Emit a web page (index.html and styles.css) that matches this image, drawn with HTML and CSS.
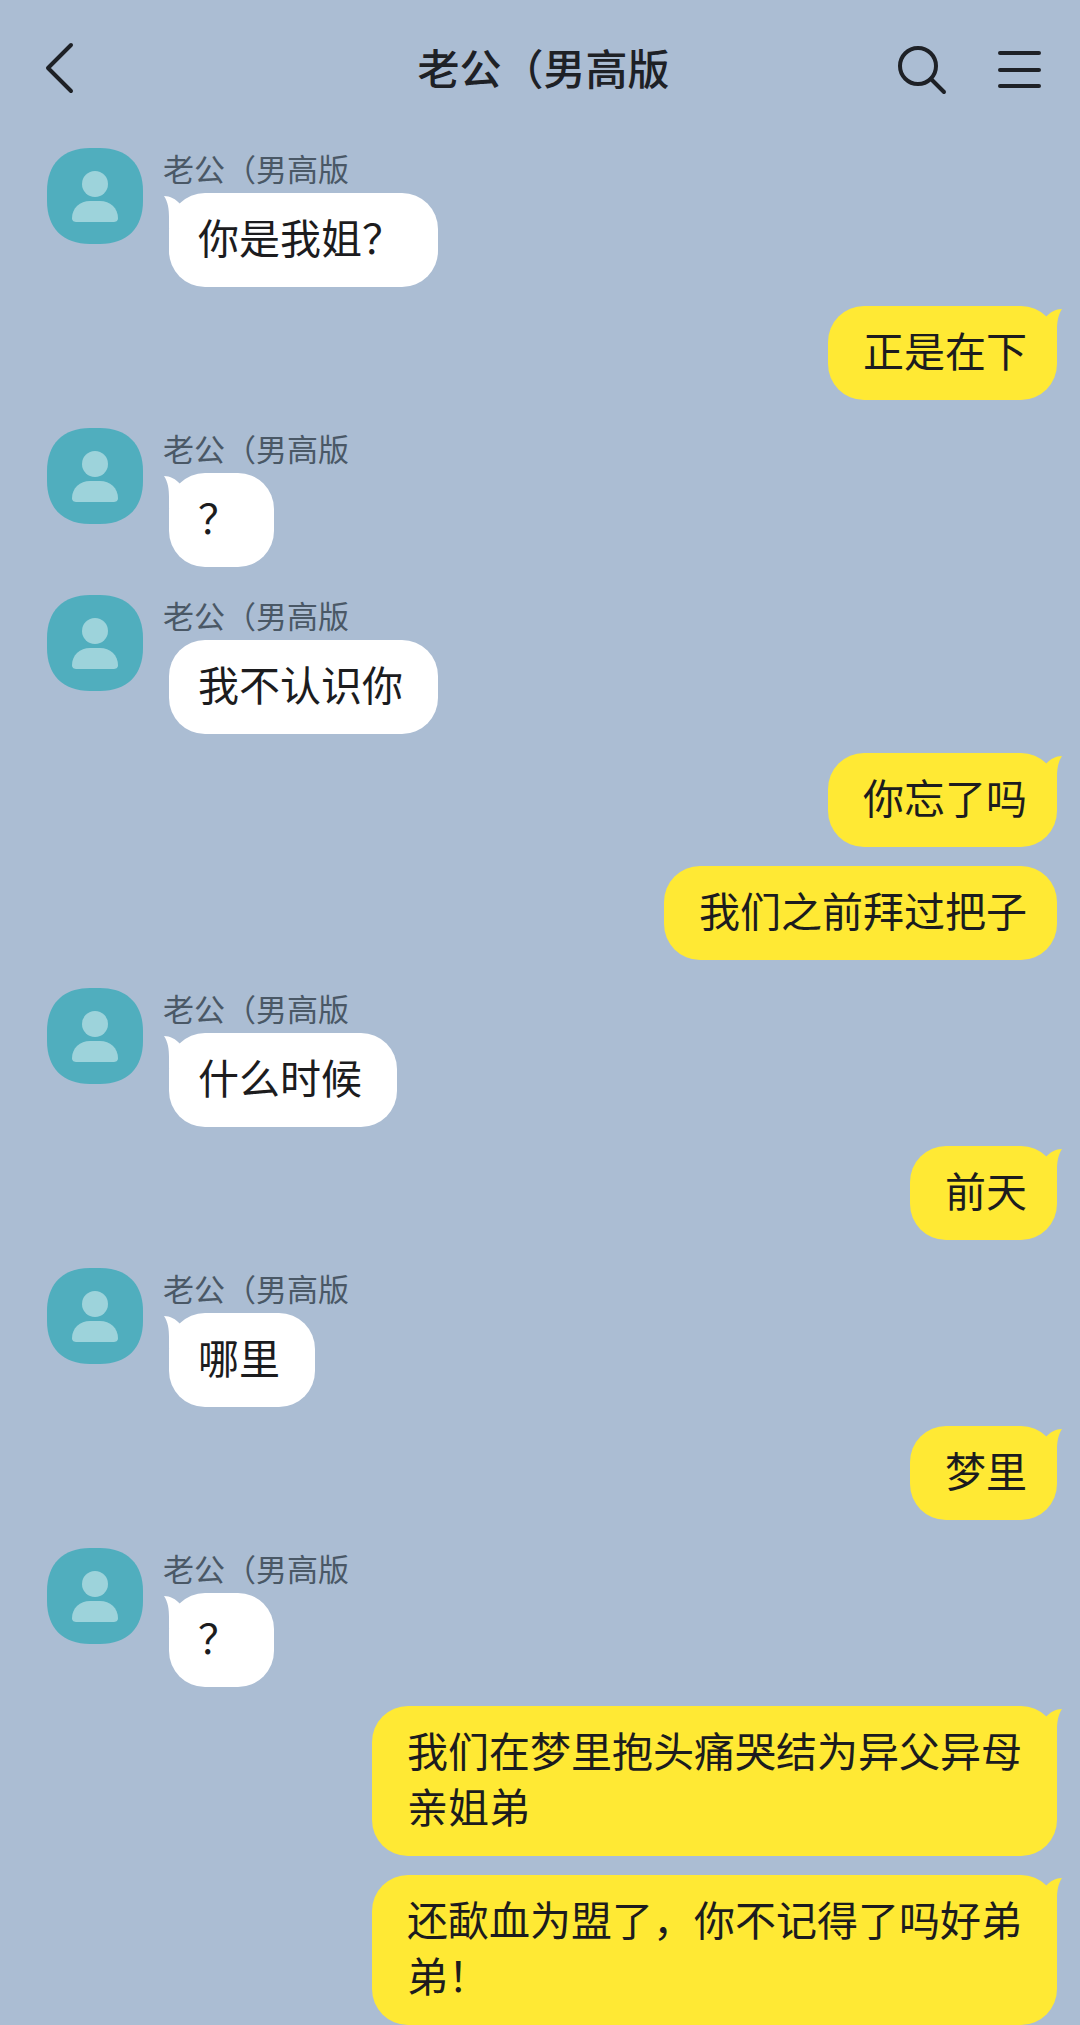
FILE: index.html
```
<!DOCTYPE html>
<html lang="zh-CN">
<head>
    <meta charset="UTF-8">
    <meta name="viewport" content="width=device-width, initial-scale=1.0">
    <title>老公（男高版</title>
    <link rel="stylesheet" href="styles.css">
</head>
<body>

<!-- Shared shapes -->
<svg class="sprite" aria-hidden="true">
    <symbol id="avatar" viewBox="0 0 96 96">
        <path fill="#50aebe" d="M0 43C0 16 16 0 43 0H53C80 0 96 16 96 43V53C96 80 80 96 53 96H43C16 96 0 80 0 53Z"/>
        <circle fill="#9dd3db" cx="48" cy="36" r="13"/>
        <path fill="#9dd3db" d="M25 70C25 60 33 53 43 53H53C63 53 71 60 71 70C71 73 69 74 66 74H30C27 74 25 73 25 70Z"/>
    </symbol>
    <symbol id="tail-left" viewBox="0 0 18 32">
        <path d="M0 0C6 0 12 3 16 8V32H5V21C5 13 4 6 0 0Z"/>
    </symbol>
    <symbol id="tail-right" viewBox="0 0 18 32">
        <path d="M18 0C12 0 6 3 2 8V32H13V21C13 13 14 6 18 0Z"/>
    </symbol>
</svg>

<header class="header">
    <button class="icon-btn" type="button" aria-label="返回">
        <svg width="28" height="50" viewBox="0 0 28 50"><path d="M26 1L3 24L26 47"/></svg>
    </button>
    <h1 class="title">老公（男高版</h1>
    <div class="actions">
        <button class="icon-btn" type="button" aria-label="搜索">
            <svg width="50" height="50" viewBox="0 0 50 50"><circle cx="20" cy="22" r="18"/><path d="M33 35L46 48"/></svg>
        </button>
        <button class="icon-btn" type="button" aria-label="菜单">
            <svg width="46" height="50" viewBox="0 0 46 50"><path d="M4 9H43M4 26H43M4 42H43"/></svg>
        </button>
    </div>
</header>

<main class="chat">
    <div class="message received">
        <svg class="avatar"><use href="#avatar"/></svg>
        <div class="content">
            <div class="name">老公（男高版</div>
            <div class="bubble">你是我姐？<svg class="tail"><use href="#tail-left"/></svg></div>
        </div>
    </div>

    <div class="message sent">
        <div class="bubble">正是在下<svg class="tail"><use href="#tail-right"/></svg></div>
    </div>

    <div class="message received">
        <svg class="avatar"><use href="#avatar"/></svg>
        <div class="content">
            <div class="name">老公（男高版</div>
            <div class="bubble">？<svg class="tail"><use href="#tail-left"/></svg></div>
        </div>
    </div>

    <div class="message received">
        <svg class="avatar"><use href="#avatar"/></svg>
        <div class="content">
            <div class="name">老公（男高版</div>
            <div class="bubble">我不认识你</div>
        </div>
    </div>

    <div class="message sent">
        <div class="bubble">你忘了吗<svg class="tail"><use href="#tail-right"/></svg></div>
    </div>

    <div class="message sent">
        <div class="bubble">我们之前拜过把子</div>
    </div>

    <div class="message received">
        <svg class="avatar"><use href="#avatar"/></svg>
        <div class="content">
            <div class="name">老公（男高版</div>
            <div class="bubble">什么时候<svg class="tail"><use href="#tail-left"/></svg></div>
        </div>
    </div>

    <div class="message sent">
        <div class="bubble">前天<svg class="tail"><use href="#tail-right"/></svg></div>
    </div>

    <div class="message received">
        <svg class="avatar"><use href="#avatar"/></svg>
        <div class="content">
            <div class="name">老公（男高版</div>
            <div class="bubble">哪里<svg class="tail"><use href="#tail-left"/></svg></div>
        </div>
    </div>

    <div class="message sent">
        <div class="bubble">梦里<svg class="tail"><use href="#tail-right"/></svg></div>
    </div>

    <div class="message received">
        <svg class="avatar"><use href="#avatar"/></svg>
        <div class="content">
            <div class="name">老公（男高版</div>
            <div class="bubble">？<svg class="tail"><use href="#tail-left"/></svg></div>
        </div>
    </div>

    <div class="message sent">
        <div class="bubble">我们在梦里抱头痛哭结为异父异母亲姐弟<svg class="tail"><use href="#tail-right"/></svg></div>
    </div>

    <div class="message sent">
        <div class="bubble">还歃血为盟了，你不记得了吗好弟弟！<svg class="tail"><use href="#tail-right"/></svg></div>
    </div>
</main>

</body>
</html>
```

FILE: styles.css
```
* {
    box-sizing: border-box;
}
body {
    margin: 0;
    background-color: #abbdd3;
    color: #1c1c1e;
    font-family: "Noto Sans CJK SC", sans-serif;
}
.sprite {
    position: absolute;
    width: 0;
    height: 0;
}

/* Header */
.header {
    display: grid;
    grid-template-columns: 1fr auto 1fr;
    align-items: center;
    height: 138px;
    padding: 0 38px 0 45px;
}
.title {
    margin: 0;
    padding-bottom: 4px;
    font-size: 42px;
    font-weight: 500;
    line-height: 56px;
    color: #1e2126;
}
.actions {
    display: flex;
    justify-content: flex-end;
    gap: 48px;
}
.icon-btn {
    display: block;
    justify-self: start;
    padding: 0;
    border: none;
    background: none;
    cursor: pointer;
}
.icon-btn svg {
    display: block;
    overflow: visible;
    fill: none;
    stroke: #1e2126;
    stroke-width: 4;
    stroke-linecap: round;
    stroke-linejoin: round;
}

/* Messages */
.chat {
    display: flex;
    flex-direction: column;
    gap: 19px;
    padding: 1px 23px 0 47px;
}
.message {
    display: flex;
}
.received {
    gap: 20px;
    padding-top: 9px;
}
.sent {
    justify-content: flex-end;
}
.avatar {
    flex: none;
    width: 96px;
    height: 96px;
}
.content {
    display: flex;
    flex-direction: column;
    align-items: flex-start;
}
.name {
    height: 45px;
    font-size: 31px;
    line-height: 40px;
    color: #4a5866;
}
.bubble {
    position: relative;
    border-radius: 36px;
    font-size: 41px;
    line-height: 56px;
}
.received .bubble {
    margin-left: 6px;
    padding: 15px 35px 23px 29px;
    background-color: #fff;
}
.sent .bubble {
    max-width: 685px;
    padding: 15px 30px 23px 35px;
    background-color: #ffe934;
}
.tail {
    position: absolute;
    top: 3px;
    width: 18px;
    height: 32px;
}
.received .tail {
    left: -5px;
    fill: #fff;
}
.sent .tail {
    right: -5px;
    fill: #ffe934;
}
```
